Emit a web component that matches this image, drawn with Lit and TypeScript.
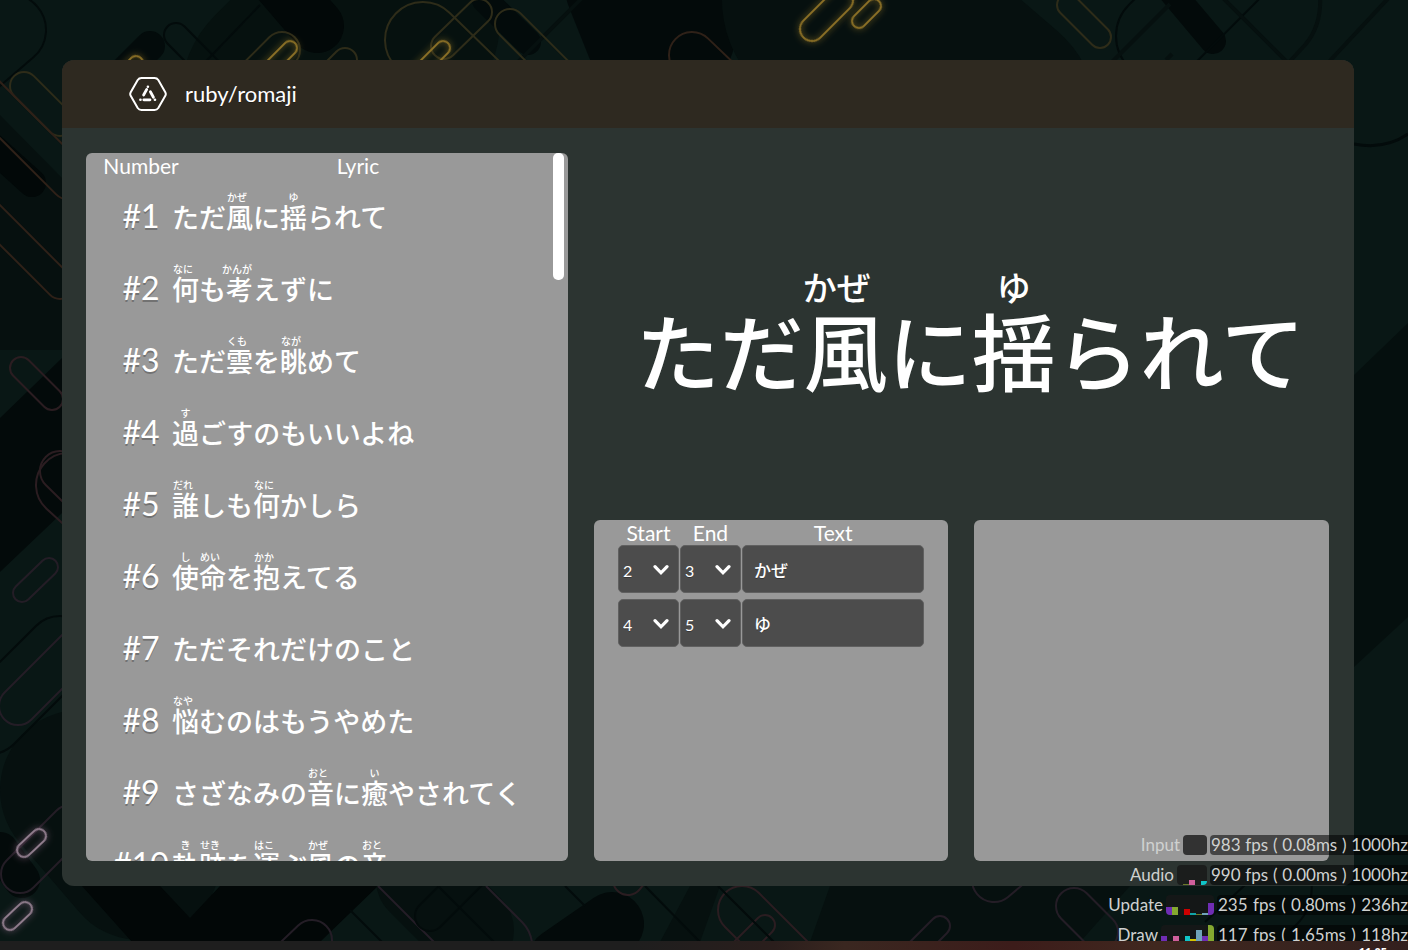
import { LitElement, html, svg, css } from "lit";
import { customElement } from "lit/decorators.js";

type Part = string | [string, string];

interface Lyric {
  id: number;
  parts: Part[];
}

const LYRICS: Lyric[] = [
  { id: 1, parts: ["ただ", ["風", "かぜ"], "に", ["揺", "ゆ"], "られて"] },
  { id: 2, parts: [["何", "なに"], "も", ["考", "かんが"], "えずに"] },
  { id: 3, parts: ["ただ", ["雲", "くも"], "を", ["眺", "なが"], "めて"] },
  { id: 4, parts: [["過", "す"], "ごすのもいいよね"] },
  { id: 5, parts: [["誰", "だれ"], "しも", ["何", "なに"], "かしら"] },
  { id: 6, parts: [["使", "し"], ["命", "めい"], "を", ["抱", "かか"], "えてる"] },
  { id: 7, parts: ["ただそれだけのこと"] },
  { id: 8, parts: [["悩", "なや"], "むのはもうやめた"] },
  { id: 9, parts: ["さざなみの", ["音", "おと"], "に", ["癒", "い"], "やされてく"] },
  { id: 10, parts: [["軌", "き"], ["跡", "せき"], "を", ["運", "はこ"], "ぶ", ["風", "かぜ"], "の", ["音", "おと"]] },
];

const RUBIES = [
  { start: 2, end: 3, text: "かぜ" },
  { start: 4, end: 5, text: "ゆ" },
];

type Bar = [slot: number, height: number, color: string];

const STATS: { name: string; slots: number; wide: boolean; fps: number; ms: string; hz: number; bars: Bar[] }[] = [
  { name: "Input", slots: 4, wide: true, fps: 983, ms: "0.08", hz: 1000, bars: [] },
  { name: "Audio", slots: 5, wide: true, fps: 990, ms: "0.00", hz: 1000,
    bars: [[1, 1, "#6b7a2a"], [2, 5, "#cf5f9c"], [4, 4, "#10c5c8"]] },
  { name: "Update", slots: 8, wide: false, fps: 235, ms: "0.80", hz: 236,
    bars: [[0, 8, "#6f2db4"], [1, 8, "#84a830"], [3, 6, "#cc0000"], [4, 2, "#10a5a8"], [5, 1, "#6b7a2a"], [6, 2, "#6fa3b8"], [7, 12, "#6f2db4"]] },
  { name: "Draw", slots: 9, wide: false, fps: 117, ms: "1.65", hz: 118,
    bars: [[0, 9, "#6f2db4"], [2, 9, "#cf5f9c"], [4, 9, "#10c5c8"], [5, 6, "#d4c400"], [6, 15, "#6fa3b8"], [7, 9, "#6f2db4"], [8, 20, "#84a830"]] },
];

function lyricLine(parts: Part[]) {
  return html`<span class="line">${parts.map((p) =>
    typeof p === "string"
      ? html`<span>${p}</span>`
      : html`<ruby><span>${p[0]}</span><rt class=${p[1].length > 1 ? "multi" : ""}>${p[1]}</rt></ruby>`
  )}</span>`;
}

const rubyStyles = css`
  .line {
    display: flex;
    align-items: flex-end;
    font-family: "Noto Sans CJK JP", sans-serif;
    font-weight: 500;
    white-space: nowrap;
  }
  ruby {
    display: flex;
    flex-direction: column-reverse;
    align-items: center;
    width: 1em;
  }
  rt {
    display: block;
  }
`;

@customElement("triangle-backdrop")
export class TriangleBackdrop extends LitElement {
  static styles = css`
    :host { display: block; overflow: hidden; background: #091715; }
    svg { display: block; width: 100%; height: 100%; }
    .dark { stroke: #030b0b; }
    .shade { stroke: #06100f; }
    .gold { stroke: #2e2c19; }
    .rust { stroke: #2f2118; }
    .rose { stroke: #2b1d21; }
    .mauve { stroke: #241d26; }
    .lit { stroke: #8a6f26; filter: drop-shadow(0 0 3px #8a6f26); }
    .pale { stroke: #8f7c8c; filter: drop-shadow(0 0 3px #84607c); }
  `;

  /** Outlined pill whose end caps are centred on the two given points. */
  private pill(x1: number, y1: number, x2: number, y2: number, r: number, tone: string, w = 2) {
    const len = Math.hypot(x2 - x1, y2 - y1);
    const angle = (Math.atan2(y2 - y1, x2 - x1) * 180) / Math.PI;
    return svg`<rect class=${tone} x=${-r} y=${-r} width=${len + 2 * r} height=${2 * r} rx=${r}
      fill="none" stroke-width=${w} transform="translate(${x1} ${y1}) rotate(${angle})"></rect>`;
  }

  private solid(x1: number, y1: number, x2: number, y2: number, r: number, color: string) {
    return svg`<line x1=${x1} y1=${y1} x2=${x2} y2=${y2} stroke=${color} stroke-width=${2 * r} stroke-linecap="round"></line>`;
  }

  render() {
    return html`<svg viewBox="0 0 1408 950" preserveAspectRatio="xMidYMid slice" aria-hidden="true">
      <rect width="1408" height="950" fill="#091715"></rect>
      ${this.solid(300, 100, 380, 20, 120, "#06110f")}
      ${this.solid(640, -20, 660, 30, 76, "#030a0a")}
      ${this.solid(840, 0, 980, 120, 118, "#06100f")}
      <path d="M0 115 62 178V350H0z" fill="#06100f"></path>
      <path d="M0 418 62 358V513L0 572z" fill="#030a0a"></path>
      <path d="M1354 375 1408 323V617L1354 667z" fill="#050f0e"></path>
      ${this.solid(80, 790, 140, 860, 80, "#06100f")}
      <path d="M82 886H160L190 918 220 886H378L320 942H132z" fill="#020707"></path>
      ${this.solid(420, 880, 470, 930, 44, "#06100f")}
      ${this.solid(560, 960, 612, 924, 32, "#030a0a")}
      <path d="M690 886H720L700 942H660z M830 886H1130L1080 942H810z" fill="#06100f"></path>
      ${this.solid(118, 78, 150, 46, 15, "#030b0b")}
      ${this.solid(260, -40, 317, 26, 27, "#020808")}
      ${this.solid(485, 0, 528, 42, 13, "#030b0b")}
      ${this.solid(1170, -10, 1213, 41, 13, "#030a0a")}
      ${this.solid(-10, 145, 32, 183, 14, "#020808")}
      ${this.solid(0, 850, 22, 880, 18, "#030a0a")}
      ${this.pill(-60, 90, 10, 30, 36, "dark")}
      ${this.pill(176, 35, 260, 120, 12, "dark")}
      ${this.pill(1160, 36, 1250, -54, 44, "dark")}
      <path class="dark" d="M260 5 190 78" fill="none" stroke-width="2"></path>
      <path class="shade" d="M600 -20 490 90M1166 60 1172 54M1220 -5 1290 65M1396 -10 1326 65M1320 -5Q1322 25 1305 45L1280 72M1112 62 1170 4" fill="none" stroke-width="4"></path>
      <path class="dark" d="M1354 144Q1385 150 1408 134" fill="none" stroke-width="3"></path>
      ${this.pill(60, 650, -10, 720, 34, "dark")}
      ${this.pill(24, 86, 60, 122, 14, "gold")}
      ${this.pill(282, 50, 240, 92, 18, "gold")}
      ${this.pill(345, 60, 300, 105, 12, "gold")}
      ${this.pill(423, 40, 500, 115, 38, "gold")}
      ${this.pill(479, 12, 444, 46, 13, "gold")}
      ${this.pill(510, 24, 570, 84, 15, "gold")}
      ${this.pill(692, 55, 760, 120, 23, "rust")}
      ${this.pill(1068, 5, 1100, 37, 11, "gold")}
      ${this.pill(-50, 60, 70, 180, 20, "rust")}
      ${this.pill(-20, 205, 60, 285, 14, "rust")}
      ${this.pill(21, 368, 52, 399, 11, "rose")}
      ${this.pill(68, 485, 90, 505, 32, "rose")}
      ${this.pill(60, 471, 110, 520, 20, "rose")}
      ${this.pill(49, 567, 22, 593, 9, "mauve")}
      ${this.pill(18, 706, 100, 624, 19, "mauve")}
      ${this.pill(20, 874, 70, 824, 19, "mauve")}
      ${this.pill(312, 940, 270, 980, 20, "mauve")}
      <path class="mauve" d="M378 886 434 942M486 886 522 922Q530 930 532 942" fill="none" stroke-width="2"></path>
      ${this.pill(430, 916, 500, 846, 15, "dark")}
      ${this.pill(628, 880, 660, 840, 15, "rose")}
      ${this.pill(742, 910, 830, 998, 24, "rose")}
      ${this.pill(765, 925, 730, 960, 10, "rose")}
      ${this.pill(994, 880, 1030, 850, 22, "mauve")}
      ${this.pill(940, 926, 910, 956, 10, "mauve")}
      ${this.pill(1074, 906, 1100, 932, 18, "mauve")}
      <path class="dark" d="M350 910 382 942M438 886 494 942M565 886 585 906M645 886 700 942M718 886 774 942M1245 885 1205 922M1310 870Q1318 910 1290 930" fill="none" stroke-width="2"></path>
      ${this.pill(136, 63, 110, 90, 7, "lit")}
      ${this.pill(290, 48, 262, 76, 7, "lit")}
      ${this.pill(443, 48, 415, 76, 7, "lit")}
      ${this.pill(812, 29, 841, 0, 12, "lit")}
      ${this.pill(859, 21, 874, 6, 7, "lit")}
      ${this.pill(39, 836, 24, 850, 7, "pale")}
      ${this.pill(25, 909, 10, 923, 7, "pale")}
    </svg>`;
  }
}

@customElement("lyric-list")
export class LyricList extends LitElement {
  static styles = [rubyStyles, css`
    :host {
      display: block;
      position: relative;
      min-height: 0;
      overflow: hidden;
      border-radius: 6px;
      background: #999;
      color: #fff;
    }
    table, thead, tbody { display: block; }
    tr {
      display: grid;
      grid-template-columns: 62px 1fr;
      padding: 0 24px;
    }
    tbody tr { height: 72px; }
    th, td { padding: 0; font-weight: 400; }
    thead th {
      display: flex;
      justify-content: center;
      padding-bottom: 2px;
      font-size: 21px;
      line-height: 26px;
    }
    .number {
      display: flex;
      justify-content: center;
      padding-top: 17px;
      font-size: 32px;
      line-height: 36px;
      text-shadow: 0 2px 0 rgba(0, 0, 0, 0.25);
    }
    .lyric { padding-top: 10px; }
    .line { font-size: 27px; line-height: 27px; min-height: 39px; }
    rt { font-size: 10px; line-height: 12px; }
    .multi { padding-right: 5px; }
    .thumb {
      position: absolute;
      top: 0;
      right: 4px;
      width: 11px;
      height: 18%;
      border-radius: 5px;
      background: #fff;
    }
  `];

  render() {
    return html`<table>
        <thead><tr><th scope="col">Number</th><th scope="col">Lyric</th></tr></thead>
        <tbody>${LYRICS.map((l) => html`<tr>
          <th scope="row" class="number">#${l.id}</th>
          <td class="lyric">${lyricLine(l.parts)}</td>
        </tr>`)}</tbody>
      </table>
      <div class="thumb"></div>`;
  }
}

@customElement("lyric-preview")
export class LyricPreview extends LitElement {
  static styles = [rubyStyles, css`
    :host {
      display: flex;
      align-items: center;
      justify-content: center;
      padding: 10px 0 0 18px;
      color: #fff;
    }
    .line { font-size: 84px; line-height: 84px; }
    rt { font-size: 34px; line-height: 41px; }
    .multi { padding-right: 18px; }
  `];

  render() {
    return lyricLine(LYRICS[0].parts);
  }
}

@customElement("ruby-editor")
export class RubyEditor extends LitElement {
  static styles = css`
    :host {
      display: block;
      border-radius: 6px;
      background: #999;
      color: #fff;
    }
    table, thead { display: block; }
    table { padding: 0 24px; }
    tbody { display: grid; gap: 6px; }
    tr {
      display: grid;
      grid-template-columns: 61px 61px 1fr;
      gap: 1px;
    }
    th, td { display: block; padding: 0; min-width: 0; }
    th { font-size: 21px; font-weight: 400; line-height: 25px; text-align: center; }
    .pick { position: relative; }
    select, input {
      display: block;
      box-sizing: border-box;
      width: 100%;
      height: 48px;
      margin: 0;
      border: 1px solid #606060;
      border-radius: 5px;
      background: #4c4c4c;
      color: #fff;
      outline: none;
      text-shadow: 0 1px 0 rgba(0, 0, 0, 0.3);
    }
    select { appearance: none; padding: 2px 4px 0; font: 16px Lato, sans-serif; }
    input { padding: 0 11px; font: 500 17px "Noto Sans CJK JP", sans-serif; }
    .pick svg {
      position: absolute;
      top: 19px;
      right: 10px;
      width: 16px;
      height: 12px;
      pointer-events: none;
    }
  `;

  private pick(label: string, value: number) {
    return html`<td class="pick">
      <select aria-label=${label}>
        ${[1, 2, 3, 4, 5, 6, 7, 8].map((n) => html`<option value=${n} ?selected=${n === value}>${n}</option>`)}
      </select>
      <svg viewBox="0 0 16 12" aria-hidden="true">
        <path d="M2 2.6 8 8.8 14 2.6" fill="none" stroke="#fff" stroke-width="3.2" stroke-linecap="round"></path>
      </svg>
    </td>`;
  }

  render() {
    return html`<table>
      <thead><tr><th scope="col">Start</th><th scope="col">End</th><th scope="col">Text</th></tr></thead>
      <tbody>${RUBIES.map((r) => html`<tr>
        ${this.pick("Start", r.start)}${this.pick("End", r.end)}
        <td><input type="text" aria-label="Text" .value=${r.text}></td>
      </tr>`)}</tbody>
    </table>`;
  }
}

@customElement("frame-stats")
export class FrameStats extends LitElement {
  static styles = css`
    :host {
      display: block;
      color: #cfd1d0;
      font: 17px/20px Lato, sans-serif;
    }
    .row {
      display: flex;
      justify-content: flex-end;
      gap: 3px;
      height: 20px;
      padding: 5px 0;
    }
    .graph {
      display: grid;
      grid-auto-flow: column;
      grid-auto-columns: 1fr;
      align-items: end;
      overflow: hidden;
      border-radius: 4px;
      background: rgba(24, 24, 24, 0.8);
    }
    .values {
      display: flex;
      justify-content: space-between;
      box-sizing: border-box;
      width: 191px;
      padding-left: 1px;
      border-radius: 4px 0 0 4px;
      background: rgba(0, 0, 0, 0.55);
      white-space: nowrap;
    }
    .wide { width: 198px; }
  `;

  render() {
    return STATS.map((s) => html`<div class="row">
      <span>${s.name}</span>
      <span class="graph" style="width:${s.slots * 6 - (s.slots > 8 ? 1 : 0)}px">
        ${s.bars.map(([slot, h, c]) => html`<i style="grid-column:${slot + 1};grid-row:1;height:${h}px;background:${c}"></i>`)}
        <i style="grid-column:${s.slots};grid-row:1"></i>
      </span>
      <span class="values ${s.wide ? "wide" : ""}">
        <span>${s.fps}</span><span>fps</span><span>(</span><span>${s.ms}ms</span><span>)</span><span>${s.hz}hz</span>
      </span>
    </div>`);
  }
}

@customElement("app-root")
export class AppRoot extends LitElement {
  static styles = css`
    :host {
      display: flex;
      flex-direction: column;
      position: relative;
      height: 100vh;
      overflow: hidden;
      font-family: Lato, sans-serif;
      color: #fff;
    }
    triangle-backdrop { position: absolute; inset: 0; }
    .stage {
      position: relative;
      display: flex;
      flex: 1;
      min-height: 0;
      box-sizing: border-box;
      padding: 60px 54px 55px 62px;
    }
    .window {
      display: flex;
      flex: 1;
      flex-direction: column;
      min-width: 0;
      overflow: hidden;
      border-radius: 12px;
      background: #2c3431;
    }
    header {
      display: flex;
      align-items: center;
      gap: 18px;
      height: 68px;
      padding-left: 67px;
      background: #2e2920;
    }
    .logo { width: 38px; height: 34px; }
    h1 { margin: 0; font-size: 22px; font-weight: 400; line-height: 26px; text-shadow: 0 1px 0 rgba(0, 0, 0, 0.3); }
    .content {
      display: grid;
      flex: 1;
      grid-template-columns: minmax(0, 40fr) minmax(0, 61fr);
      grid-template-rows: minmax(0, 1fr);
      gap: 26px;
      min-height: 0;
      padding: 25px 25px 25px 24px;
    }
    .side {
      display: grid;
      grid-template-columns: repeat(2, minmax(0, 1fr));
      grid-template-rows: repeat(2, minmax(0, 1fr));
      gap: 26px;
    }
    lyric-preview { grid-column: 1 / -1; }
    .blank { border-radius: 6px; background: #999; }
    .taskbar {
      position: relative;
      display: flex;
      justify-content: flex-end;
      height: 9px;
      overflow: hidden;
      background: linear-gradient(90deg, #1e1e1e 45%, #2a1e1c 55%, #3a2720 60%, #3c1c1a 72%, #40281f 82%, #33201e);
    }
    .clock { padding: 5px 21px 0 0; font: bold 11px/12px "Open Sans", sans-serif; }
    .overlay { position: absolute; right: 0; bottom: 9px; height: 111px; overflow: hidden; }
  `;

  render() {
    return html`<triangle-backdrop></triangle-backdrop>
      <main class="stage">
        <section class="window">
          <header>
            <svg class="logo" viewBox="0 0 38 34" fill="none" stroke="#fff" stroke-linecap="round" aria-hidden="true">
              <path d="M12.5 1H25.5Q28 1 29.3 3L36.3 15.2Q37.3 17 36.3 18.8L29.3 31Q28 33 25.5 33H12.5Q10 33 8.7 31L1.7 18.8Q.7 17 1.7 15.2L8.7 3Q10 1 12.5 1Z" stroke-width="2"></path>
              <path d="M17.7 12.4 14.6 18M21.4 14.8 24.4 20.2M14.8 22.8H21" stroke-width="2.8"></path>
              <path d="M18.9 9.7V9.8M25.9 22.8H26M11.4 22.8H11.5" stroke-width="2.6"></path>
            </svg>
            <h1>ruby/romaji</h1>
          </header>
          <div class="content">
            <lyric-list></lyric-list>
            <div class="side">
              <lyric-preview></lyric-preview>
              <ruby-editor></ruby-editor>
              <div class="blank"></div>
            </div>
          </div>
        </section>
      </main>
      <div class="overlay"><frame-stats></frame-stats></div>
      <footer class="taskbar"><time class="clock">11:05</time></footer>`;
  }
}
